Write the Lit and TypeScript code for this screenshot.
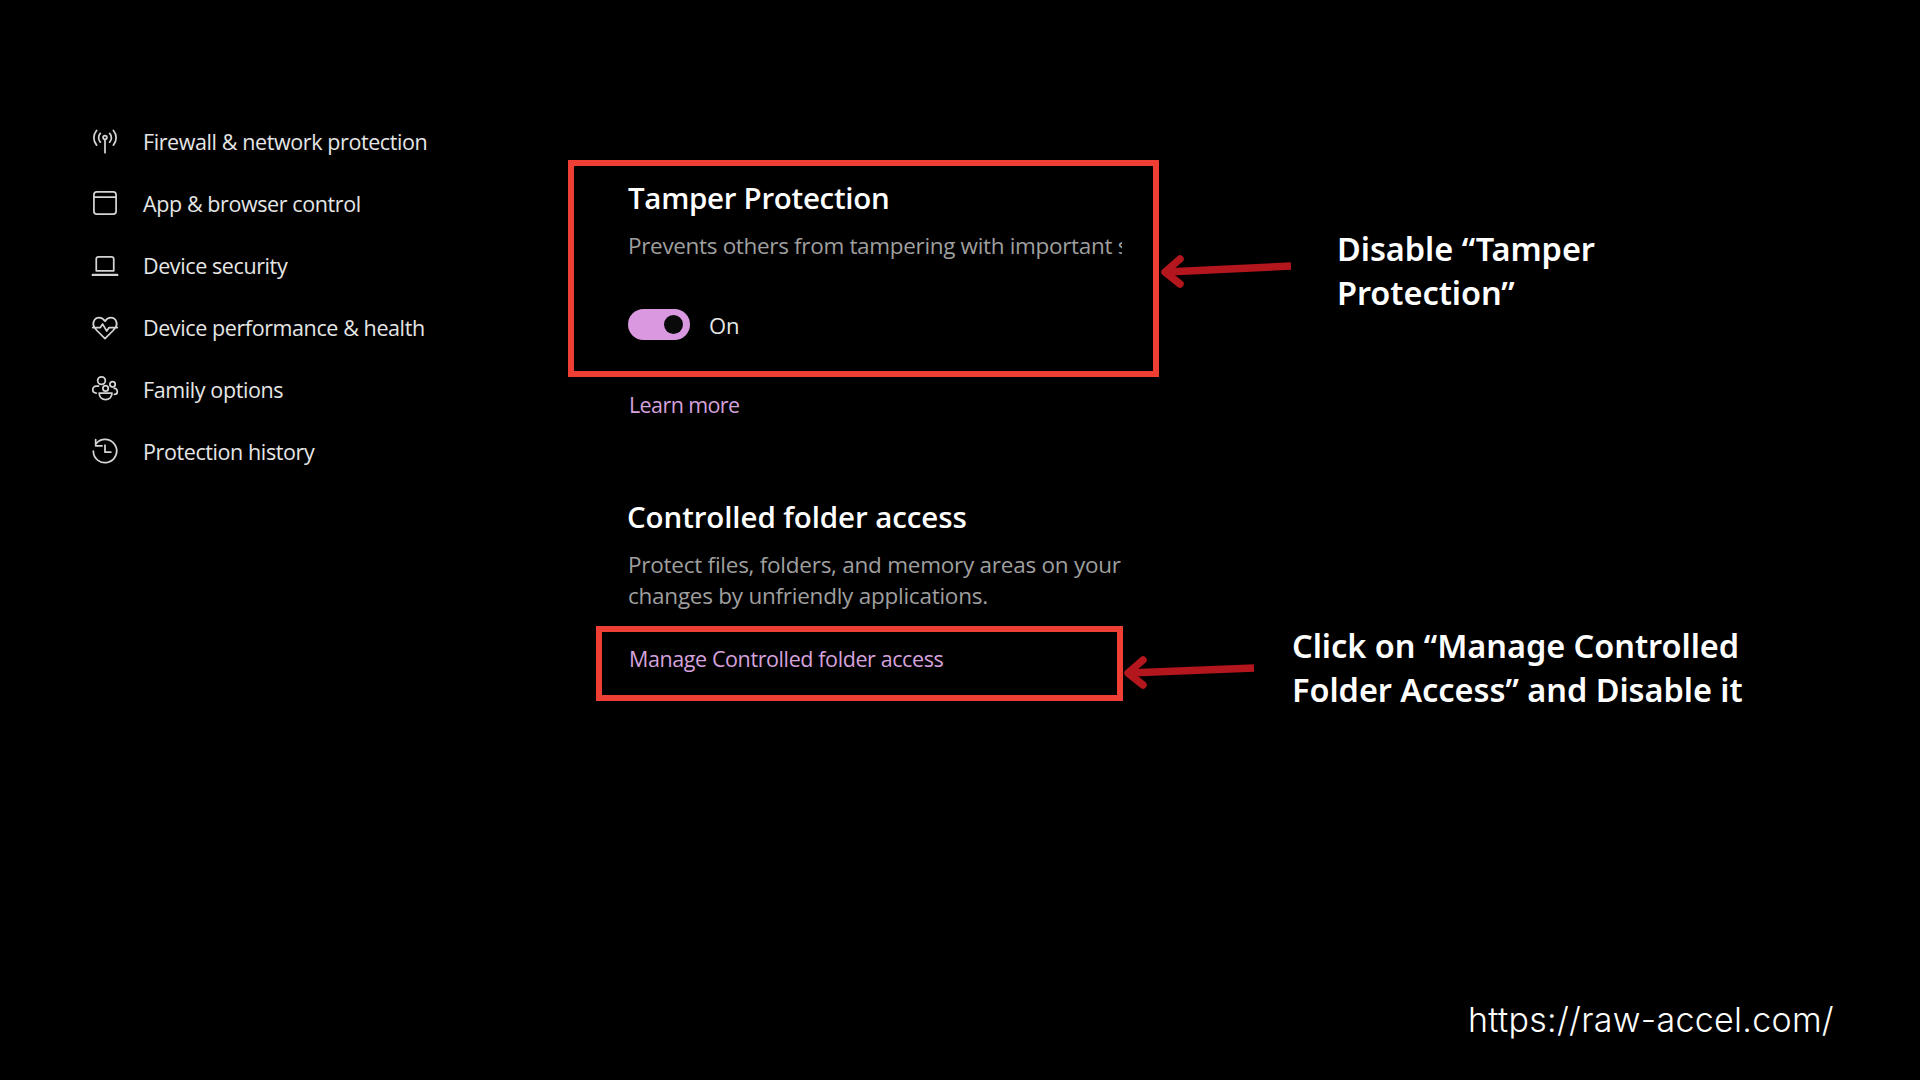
import { LitElement, html, css, svg } from "lit";
import { customElement } from "lit/decorators.js";

const icons = [
  svg`<circle cx="12" cy="9" r="1.6"/><path d="M12 11v11M8 5.5a5.5 5.5 0 0 0 0 7.5M16 5.5a5.5 5.5 0 0 1 0 7.5M4.8 3a9.5 9.5 0 0 0 0 12.5M19.2 3a9.5 9.5 0 0 1 0 12.5"/>`,
  svg`<rect x="2.5" y="2.5" width="19" height="19" rx="2.5"/><path d="M2.5 7h19"/>`,
  svg`<path d="M4.5 17V7a2 2 0 0 1 2-2h11a2 2 0 0 1 2 2v10z"/><path d="M1.5 20.5h21" stroke-width="2"/>`,
  svg`<path d="M5 15 2.8 12.2C.8 9 2.6 4 7 4c2.2 0 3.8 1.2 5 3 1.2-1.8 2.8-3 5-3 4.4 0 6.2 5 4.2 8.2L19 15l-7 7zM1.5 12.5H8l2-3 3.5 6 2-3h7"/>`,
  svg`<circle cx="9" cy="4.8" r="3.3"/><circle cx="18.5" cy="8" r="2.3"/><circle cx="12.5" cy="11.5" r="2.3"/><path d="M6.5 9.5H4.5a3 3 0 0 0-3 3c0 2 1.5 3 3 3M20 11.5h.5a2.5 2.5 0 0 1 2 3c0 1.2-1.2 2-2.5 2M7 15.5h11c0 3.5-2.5 5.5-5.5 5.5S7 19 7 15.5z"/>`,
  svg`<path d="M4.5 5.4A10 10 0 1 1 2 12"/><path d="M4 2.2V7.5h5.5"/><path d="M12 7v6h5"/>`,
];
const items = [
  "Firewall & network protection",
  "App & browser control",
  "Device security",
  "Device performance & health",
  "Family options",
  "Protection history",
];

@customElement("app-root")
export class AppRoot extends LitElement {
  static styles = css`
    :host { display: block; width: 1920px; height: 1080px; background: #000; overflow: hidden; position: relative; color: #fff; font-family: "Open Sans", "Noto Sans", sans-serif; }
    .page { display: flex; height: 100%; box-sizing: border-box; }
    .nav { width: 628px; flex: none; box-sizing: border-box; padding: 110px 0 0 91px; display: flex; flex-direction: column; }
    .item { height: 62px; display: flex; align-items: center; gap: 24px; font-size: 21.5px; color: #e6e6e6; letter-spacing: -0.4px; }
    .item svg { width: 28px; height: 28px; flex: none; fill: none; stroke: #d4d4d4; stroke-width: 1.5; stroke-linecap: round; stroke-linejoin: round; }
    .main { flex: none; width: 540px; padding-top: 175px; display: flex; flex-direction: column; }
    h2 { margin: 0; font-weight: 600; font-size: 29.5px; line-height: 46px; color: #fff; letter-spacing: -0.3px; white-space: nowrap; }
    .desc { color: #9f9f9f; font-size: 22.5px; line-height: 31px; letter-spacing: -0.33px; }
    .clip { white-space: nowrap; overflow: hidden; margin-top: 9px; width: 494px; }
    .toggle-row { display: flex; align-items: center; gap: 19px; margin-top: 48px; font-size: 22px; color: #e6e6e6; }
    .toggle { width: 62px; height: 31px; border-radius: 16px; background: #d998e0; display: flex; align-items: center; justify-content: flex-end; padding-right: 7px; box-sizing: border-box; }
    .knob { width: 19px; height: 19px; border-radius: 50%; background: #0a0a0a; }
    .link { color: #d6a2dd; font-size: 21.5px; line-height: 31px; letter-spacing: -0.4px; margin-left: 1px; }
    .learn { margin-top: 49px; letter-spacing: -0.6px; }
    .second { margin: 74px 0 0 -1px; letter-spacing: -0.1px; }
    .second-desc { margin-top: 9px; white-space: nowrap; letter-spacing: -0.25px; }
    .manage { margin-top: 32px; }
    .mark { position: absolute; box-sizing: border-box; border: 6px solid #ef3e33; }
    .mark-a { left: 568px; top: 160px; width: 591px; height: 217px; }
    .mark-b { left: 596px; top: 626px; width: 527px; height: 75px; }
    .arrow { position: absolute; left: 0; top: 0; width: 1920px; height: 1080px; pointer-events: none; fill: none; stroke: #b3161c; stroke-width: 7.5px; stroke-linejoin: round; }
    .cap { stroke-linecap: round; }
    .note { position: absolute; font-family: "Noto Sans", sans-serif; font-weight: 600; font-size: 32.5px; line-height: 44px; color: #fff; white-space: nowrap; letter-spacing: -0.05px; }
    .note-a { left: 1337px; top: 227px; }
    .note-b { left: 1292px; top: 624px; }
    .url { position: absolute; left: 1468px; top: 996px; font-family: "Inter", sans-serif; font-weight: 300; font-size: 34px; line-height: 48px; color: #fff; white-space: nowrap; letter-spacing: 0.3px; }
  `;

  render() {
    return html`
      <div class="page">
        <nav class="nav">
          ${items.map((t, i) => html`<div class="item"><svg viewBox="0 0 24 24">${icons[i]}</svg><span>${t}</span></div>`)}
        </nav>
        <main class="main">
          <h2>Tamper Protection</h2>
          <div class="desc clip">Prevents others from tampering with important settings</div>
          <div class="toggle-row"><div class="toggle"><div class="knob"></div></div><span>On</span></div>
          <div class="link learn">Learn more</div>
          <h2 class="second">Controlled folder access</h2>
          <div class="desc second-desc">Protect files, folders, and memory areas on your<br />changes by unfriendly applications.</div>
          <div class="link manage">Manage Controlled folder access</div>
        </main>
      </div>
      <div class="mark mark-a"></div>
      <div class="mark mark-b"></div>
      <svg class="arrow" viewBox="0 0 1920 1080">
        <path d="M1291 266 1166 272"/><path class="cap" d="M1180 259 1165 272 1180 284"/>
        <path d="M1254 668 1129 673"/><path class="cap" d="M1143 660 1128 673 1143 685"/>
      </svg>
      <div class="note note-a">Disable “Tamper<br />Protection”</div>
      <div class="note note-b">Click on “Manage Controlled<br />Folder Access” and Disable it</div>
      <div class="url">https://raw-accel.com/</div>
    `;
  }
}
